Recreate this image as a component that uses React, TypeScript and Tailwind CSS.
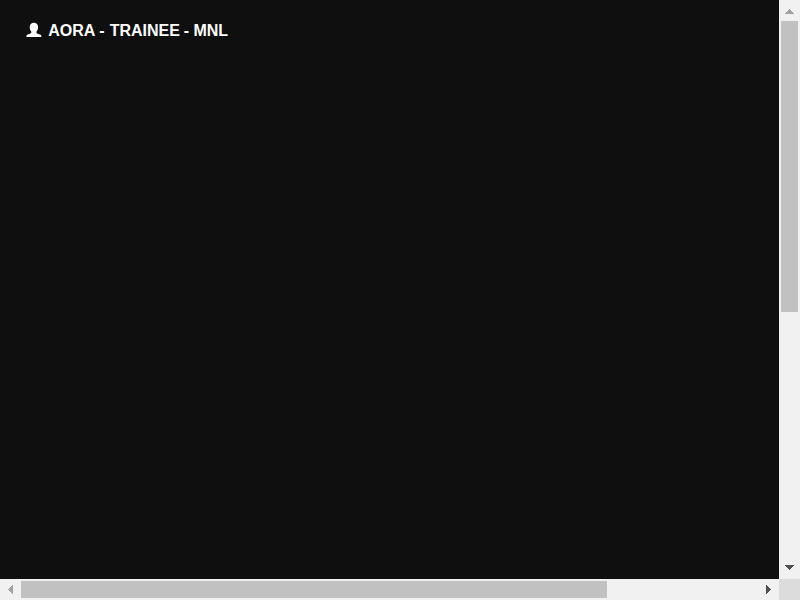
function VerticalScrollbar() {
  return (
    <div className="flex w-[21px] shrink-0 flex-col items-center bg-[#f1f1f1]">
      <svg className="h-[21px] w-[21px] shrink-0" viewBox="0 0 21 21" shapeRendering="crispEdges">
        <path d="M6 14v-1h1v-1h1v-1h1v-1h1v-1h1v1h1v1h1v1h1v1h1v1z" fill="#a3a3a3" />
      </svg>
      <div className="h-[291px] w-[17px] bg-[#c1c1c1]" />
      <svg className="mt-auto h-[21px] w-[21px] shrink-0" viewBox="0 0 21 21" shapeRendering="crispEdges">
        <path d="M6 7v1h1v1h1v1h1v1h1v1h1v-1h1v-1h1v-1h1v-1h1v-1z" fill="#505050" />
      </svg>
    </div>
  );
}

function HorizontalScrollbar() {
  return (
    <div className="flex h-[21px] shrink-0 bg-[#f1f1f1]">
      <div className="flex flex-1 items-center">
        <svg className="h-[21px] w-[21px] shrink-0" viewBox="0 0 21 21" shapeRendering="crispEdges">
          <path d="M13 6h-1v1h-1v1h-1v1h-1v1h-1v1h1v1h1v1h1v1h1v1h1z" fill="#a3a3a3" />
        </svg>
        <div className="h-[17px] w-[586px] bg-[#c1c1c1]" />
        <svg className="ml-auto h-[21px] w-[21px] shrink-0" viewBox="0 0 21 21" shapeRendering="crispEdges">
          <path d="M8 6h1v1h1v1h1v1h1v1h1v1h-1v1h-1v1h-1v1h-1v1h-1z" fill="#505050" />
        </svg>
      </div>
      <div className="w-[21px] bg-[#dcdcdc]" />
    </div>
  );
}

export default function App() {
  return (
    <div className="flex h-[600px] w-[800px] flex-col overflow-hidden bg-[#0f0f0f]">
      <div className="flex flex-1">
        <main className="flex-1 pt-5 pl-[26px]">
          <div className="flex items-start font-['Liberation_Sans',Arial,sans-serif] text-[16px] leading-5 font-bold whitespace-nowrap text-white">
            <svg className="mt-[2px] mr-[6.3px] h-4 w-4" viewBox="0 0 16 16" fill="currentColor">
              <path d="M7.900 .8C5.300 .8 3.700 2.500 3.700 5c0 1.900.5 3.500 1.600 4.400v1.300c0 .5-.5.800-1.300 1.100l-2.100.8C.8 13 .4 13.500.4 15h15c0-1.500-.4-2-1.500-2.400l-2.100-.8c-.8-.3-1.300-.6-1.300-1.100V9.400c1.100-.9 1.600-2.500 1.600-4.400 0-2.500-1.600-4.200-4.200-4.200z" />
            </svg>
            <span className="mt-px">
              AORA - <span className="ml-[0.7px] mr-[-0.7px]">TRAINEE</span> - MNL
            </span>
          </div>
        </main>
        <VerticalScrollbar />
      </div>
      <HorizontalScrollbar />
    </div>
  );
}
